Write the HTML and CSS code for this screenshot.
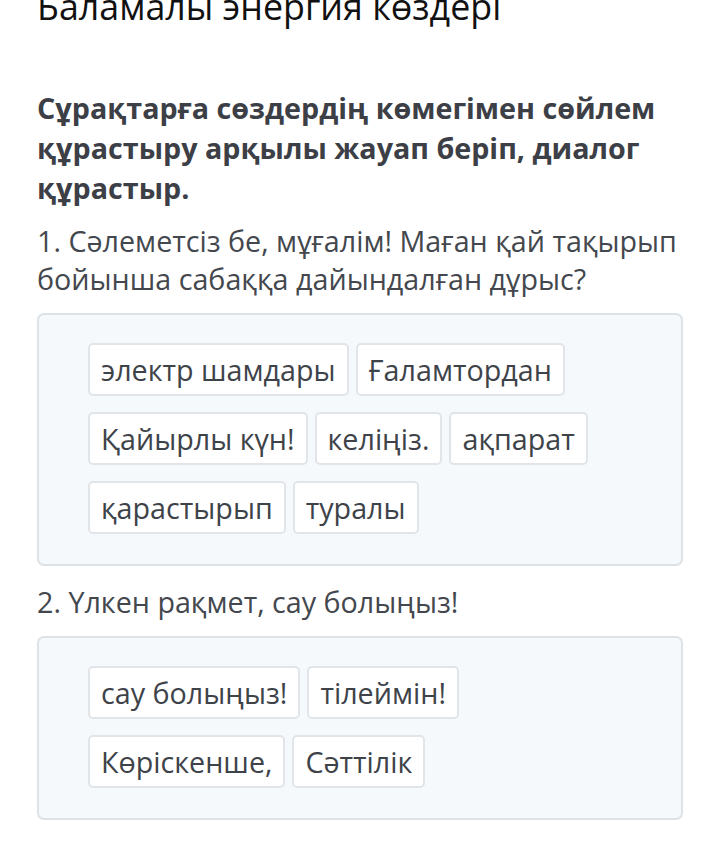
FILE: index.html
```html
<!DOCTYPE html>
<html lang="kk">
<head>
<meta charset="utf-8">
<link rel="stylesheet" href="styles.css">
</head>
<body>
<main class="page">
  <h1 class="title">Баламалы энергия көздері</h1>
  <h2 class="task">Сұрақтарға сөздердің көмегімен сөйлем құрастыру арқылы жауап беріп, диалог құрастыр.</h2>

  <p class="question">1. Сәлеметсіз бе, мұғалім! Маған қай тақырып бойынша сабаққа дайындалған дұрыс?</p>
  <div class="bank">
    <div class="row">
      <span class="chip">электр шамдары</span>
      <span class="chip">Ғаламтордан</span>
    </div>
    <div class="row">
      <span class="chip">Қайырлы күн!</span>
      <span class="chip">келіңіз.</span>
      <span class="chip">ақпарат</span>
    </div>
    <div class="row">
      <span class="chip">қарастырып</span>
      <span class="chip">туралы</span>
    </div>
  </div>

  <p class="question">2. Үлкен рақмет, сау болыңыз!</p>
  <div class="bank">
    <div class="row">
      <span class="chip">сау болыңыз!</span>
      <span class="chip">тілеймін!</span>
    </div>
    <div class="row">
      <span class="chip">Көріскенше,</span>
      <span class="chip">Сәттілік</span>
    </div>
  </div>
</main>
</body>
</html>
```

FILE: styles.css
```css
* { box-sizing: border-box; }
html, body { margin: 0; padding: 0; background: #ffffff; }
body {
  font-family: "Open Sans", "Noto Sans", "DejaVu Sans", sans-serif;
  color: #3e4349;
  overflow: hidden;
}
.page {
  width: 720px;
  padding: 0 37px;
}
.title {
  margin: -14px 0 62px;
  font-size: 35.8px;
  line-height: 40px;
  font-weight: 400;
  color: #111111;
}
.task {
  margin: 0 0 14px;
  font-size: 28.7px;
  line-height: 40px;
  font-weight: 700;
  color: #3c4046;
}
.question {
  margin: 0 0 15px;
  font-size: 28.7px;
  line-height: 38px;
  font-weight: 400;
  color: #44484e;
}
.bank {
  background: #f5f9fc;
  border: 2px solid #dde2e6;
  border-radius: 7px;
  padding: 28px 49px 30px;
  display: flex;
  flex-direction: column;
  gap: 16px;
  margin-bottom: 17px;
}
.row {
  display: flex;
  gap: 7px;
}
.chip {
  display: inline-block;
  background: #ffffff;
  border: 2px solid #e1e5e9;
  border-radius: 5px;
  padding: 8px 11px;
  font-size: 28.7px;
  line-height: 33px;
  color: #3e4349;
}
```
